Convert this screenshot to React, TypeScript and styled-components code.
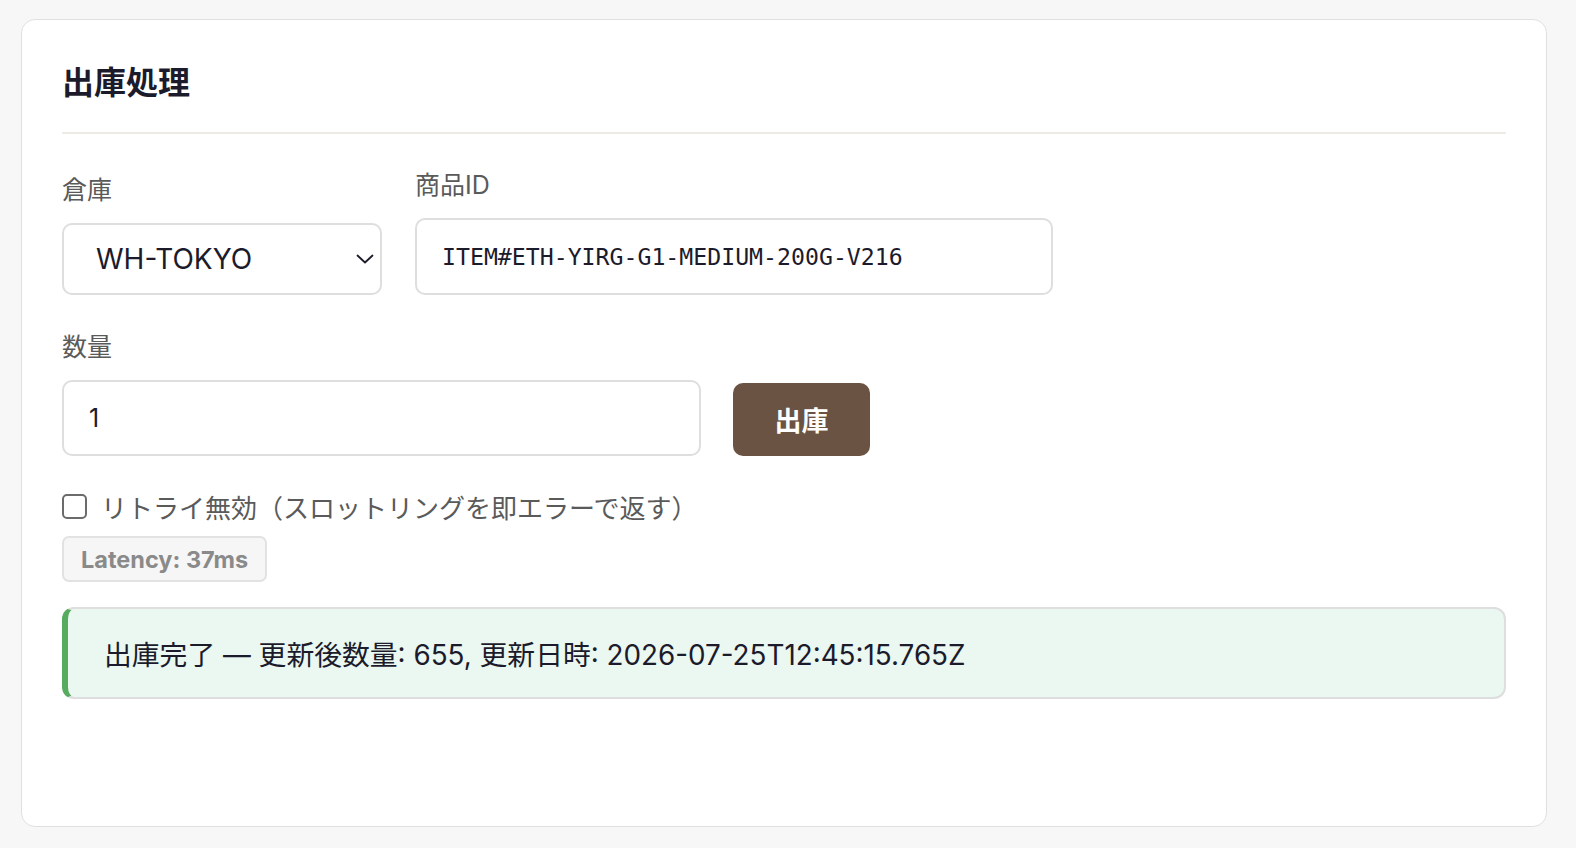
import React from "react";
import styled, { createGlobalStyle } from "styled-components";

const GlobalStyle = createGlobalStyle`
  html, body {
    margin: 0;
    padding: 0;
    background: #f7f7f7;
  }
  body {
    font-family: Inter, "Noto Sans CJK JP", sans-serif;
    -webkit-font-smoothing: antialiased;
  }
  * { box-sizing: border-box; }
`;

const Page = styled.div`
  padding: 19px 29px 21px 21px;
`;

const Card = styled.section`
  height: 808px;
  background: #ffffff;
  border: 1.5px solid #e0e0e0;
  border-radius: 14px;
  padding: 40px;
`;

const Title = styled.h2`
  margin: 0;
  font-size: 32px;
  line-height: 40px;
  font-weight: 700;
  color: #1c1b2b;
  padding-top: 3px;
  padding-bottom: 29px;
  border-bottom: 2px solid #eeebe6;
`;

const Form = styled.div`
  display: flex;
  flex-direction: column;
  padding-top: 36px;
`;

const Row = styled.div<{ $gap: number; $top?: number }>`
  display: flex;
  align-items: flex-end;
  gap: ${(p) => p.$gap}px;
  margin-top: ${(p) => p.$top ?? 0}px;
`;

const Field = styled.label<{ $width: number }>`
  display: flex;
  flex-direction: column;
  gap: 18px;
  width: ${(p) => p.$width}px;
`;

const FieldLabel = styled.span`
  font-size: 25px;
  line-height: 30px;
  color: #5a5a5a;
`;

const SelectWrap = styled.div`
  position: relative;
  height: 72px;
`;

const Select = styled.select`
  appearance: none;
  -webkit-appearance: none;
  width: 100%;
  height: 100%;
  border: 2px solid #dedede;
  border-radius: 10px;
  background: #ffffff;
  padding: 0 50px 0 32px;
  font-family: Inter, "Noto Sans CJK JP", sans-serif;
  font-size: 28px;
  color: #1c1b2b;
  outline: none;
`;

const Chevron = styled.svg`
  position: absolute;
  right: 8px;
  top: 31px;
  width: 18px;
  height: 10px;
  pointer-events: none;
`;

const TextInput = styled.input<{ $mono?: boolean }>`
  width: 100%;
  height: ${(p) => (p.$mono ? 77 : 76)}px;
  border: 2px solid #dedede;
  border-radius: 10px;
  background: #ffffff;
  padding: 0 25px;
  font-family: ${(p) =>
    p.$mono ? '"DejaVu Sans Mono", "Liberation Mono", monospace' : 'Inter, "Noto Sans CJK JP", sans-serif'};
  font-size: ${(p) => (p.$mono ? 23.2 : 25)}px;
  color: #1c1b2b;
  outline: none;
`;

const SubmitButton = styled.button`
  width: 137px;
  height: 73px;
  border: none;
  border-radius: 10px;
  background: #6b5344;
  color: #ffffff;
  font-family: Inter, "Noto Sans CJK JP", sans-serif;
  font-size: 27px;
  font-weight: 700;
  cursor: pointer;
`;

const CheckRow = styled.label`
  display: flex;
  align-items: center;
  gap: 14px;
  margin-top: 32px;
  height: 36px;
  font-size: 26px;
  color: #5a5a5a;
`;

const Checkbox = styled.input`
  appearance: none;
  -webkit-appearance: none;
  margin: 0;
  width: 25px;
  height: 25px;
  border: 2px solid #6b6b6b;
  border-radius: 5px;
  background: #ffffff;
`;

const Badge = styled.span`
  align-self: flex-start;
  display: inline-flex;
  align-items: center;
  height: 46px;
  margin-top: 12px;
  padding: 0 17px;
  border: 2px solid #e2e2e2;
  border-radius: 7px;
  background: #f6f6f6;
  color: #8a8a8a;
  font-size: 23.5px;
  font-weight: 700;
`;

const Alert = styled.div`
  display: flex;
  align-items: center;
  height: 92px;
  margin-top: 25px;
  padding-left: 36px;
  border: 2px solid #dedede;
  border-left: 6px solid #56ab5e;
  border-radius: 12px;
  background: #eaf8f1;
  color: #1c1b2b;
  font-size: 27.8px;
`;

export default function App() {
  return (
    <>
      <GlobalStyle />
      <Page>
        <Card>
          <Title>出庫処理</Title>
          <Form>
            <Row $gap={33}>
              <Field $width={320}>
                <FieldLabel>倉庫</FieldLabel>
                <SelectWrap>
                  <Select defaultValue="WH-TOKYO">
                    <option value="WH-TOKYO">WH-TOKYO</option>
                    <option value="WH-OSAKA">WH-OSAKA</option>
                  </Select>
                  <Chevron viewBox="0 0 18 10" fill="none">
                    <polyline
                      points="1.5,1.5 9,8.5 16.5,1.5"
                      stroke="#1c1b2b"
                      strokeWidth="1.8"
                      strokeLinecap="round"
                      strokeLinejoin="round"
                    />
                  </Chevron>
                </SelectWrap>
              </Field>
              <Field $width={638}>
                <FieldLabel>商品ID</FieldLabel>
                <TextInput $mono defaultValue="ITEM#ETH-YIRG-G1-MEDIUM-200G-V216" />
              </Field>
            </Row>
            <Row $gap={32} $top={37}>
              <Field $width={639}>
                <FieldLabel>数量</FieldLabel>
                <TextInput type="number" defaultValue="1" />
              </Field>
              <SubmitButton type="button">出庫</SubmitButton>
            </Row>
            <CheckRow>
              <Checkbox type="checkbox" />
              <span>リトライ無効（スロットリングを即エラーで返す）</span>
            </CheckRow>
            <Badge>Latency: 37ms</Badge>
            <Alert>出庫完了 — 更新後数量: 655, 更新日時: 2026-07-25T12:45:15.765Z</Alert>
          </Form>
        </Card>
      </Page>
    </>
  );
}
